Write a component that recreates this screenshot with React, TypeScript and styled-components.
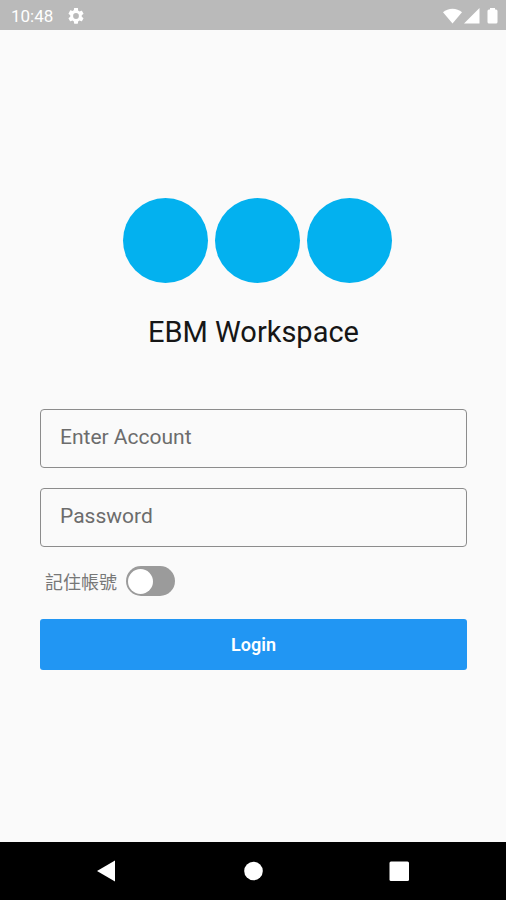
import React from "react";
import styled, { createGlobalStyle } from "styled-components";

const GlobalStyle = createGlobalStyle`
  *, *::before, *::after { box-sizing: border-box; }
  body {
    margin: 0;
    background: #fafafa;
    font-family: Roboto, "Noto Sans CJK TC", sans-serif;
  }
`;

const Screen = styled.div`
  min-height: 100vh;
  display: flex;
  flex-direction: column;
`;

const StatusBar = styled.header`
  height: 30px;
  padding: 2px 8px 0 11px;
  display: flex;
  align-items: center;
  justify-content: space-between;
  background: #bababa;
  color: #fff;
  font-size: 17px;
`;

const StatusGroup = styled.div<{ $gap: number }>`
  display: flex;
  align-items: center;
  gap: ${({ $gap }) => $gap}px;
`;

const Icon = styled.svg`
  display: block;
  fill: #fff;
`;

const Main = styled.main`
  flex: 1;
  display: flex;
  flex-direction: column;
  justify-content: center;
  padding: 0 39px 4px 40px;
`;

const Logo = styled.div`
  display: flex;
  justify-content: center;
  gap: 7px;
  padding-left: 8px;
`;

const Dot = styled.span`
  width: 85px;
  height: 85px;
  border-radius: 50%;
  background: #03b1ef;
`;

const Title = styled.h1`
  margin: 32px 0 60px;
  font-size: 29px;
  line-height: 34px;
  font-weight: 400;
  text-align: center;
  color: #161616;
`;

const Form = styled.form`
  display: flex;
  flex-direction: column;
  gap: 20px;
`;

const Field = styled.input`
  width: 100%;
  height: 59px;
  padding: 0 19px 3px;
  border: 1px solid #8c8c8c;
  border-radius: 4px;
  background: transparent;
  font: inherit;
  font-size: 21px;
  color: #212121;

  &::placeholder {
    color: #6c6c6c;
    opacity: 1;
  }
`;

const RememberRow = styled.label`
  display: flex;
  align-items: center;
  gap: 9px;
  height: 28px;
  padding-left: 5px;
  font-size: 18px;
  color: #777;
`;

const Switch = styled.input`
  appearance: none;
  width: 49px;
  height: 30px;
  margin: 0;
  padding: 2px;
  display: flex;
  align-items: center;
  border-radius: 15px;
  background: #9b9b9b;

  &::before {
    content: "";
    width: 25px;
    height: 25px;
    border-radius: 50%;
    background: #fff;
  }

  &:checked {
    justify-content: flex-end;
    background: #2196f3;
  }
`;

const LoginButton = styled.button`
  height: 51px;
  margin-top: 4px;
  border: 0;
  border-radius: 3px;
  background: #2196f3;
  color: #fff;
  font: inherit;
  font-size: 18px;
  font-weight: 600;
`;

const NavBar = styled.nav`
  height: 58px;
  display: flex;
  align-items: center;
  justify-content: center;
  gap: 122px;
  background: #000;
`;

const NavButton = styled.button`
  width: 24px;
  height: 24px;
  padding: 0;
  border: 0;
  background: none;
`;

export default function App() {
  return (
    <Screen>
      <GlobalStyle />
      <StatusBar>
        <StatusGroup $gap={15}>
          <span>10:48</span>
          <Icon width="16" height="16" viewBox="2 2 20 20" aria-hidden="true">
            <path d="M19.14 12.94c.04-.3.06-.61.06-.94s-.02-.64-.07-.94l2.03-1.58a.49.49 0 0 0 .12-.61l-1.92-3.32a.49.49 0 0 0-.59-.22l-2.39.96c-.5-.38-1.03-.7-1.62-.94l-.36-2.54A.48.48 0 0 0 13.92 2h-3.84c-.24 0-.43.17-.47.41l-.36 2.54c-.59.24-1.13.57-1.62.94l-2.39-.96a.48.48 0 0 0-.59.22L2.74 8.87a.48.48 0 0 0 .12.61l2.03 1.58c-.05.3-.09.63-.09.94s.02.64.07.94l-2.03 1.58a.49.49 0 0 0-.12.61l1.92 3.32c.12.22.37.29.59.22l2.39-.96c.5.38 1.03.7 1.62.94l.36 2.54c.05.24.24.41.48.41h3.84c.24 0 .44-.17.47-.41l.36-2.54c.59-.24 1.13-.56 1.62-.94l2.39.96c.22.08.47 0 .59-.22l1.92-3.32a.48.48 0 0 0-.12-.61zM12 15.6a3.6 3.6 0 1 1 0-7.2 3.6 3.6 0 0 1 0 7.2z" />
          </Icon>
        </StatusGroup>
        <StatusGroup $gap={2}>
          <Icon width="19" height="16" viewBox="0 0 19 16" aria-hidden="true">
            <path d="M9.5 15.500 0 4.300C5-.5 14-.5 19 4.300z" />
          </Icon>
          <Icon width="16" height="16" viewBox="0 0 16 16" aria-hidden="true">
            <path d="M0 15.500 15.500 0v15.500z" />
          </Icon>
          <Icon width="16" height="18" viewBox="0 0 16 18" aria-hidden="true">
            <path d="M8 2.500V1h5v1.500h1q1.500 0 1.500 1.500V15q0 1.500-1.500 1.500H7q-1.500 0-1.500-1.500V4Q5.500 2.500 7 2.500z" />
          </Icon>
        </StatusGroup>
      </StatusBar>
      <Main>
        <Logo aria-hidden="true">
          <Dot />
          <Dot />
          <Dot />
        </Logo>
        <Title>EBM Workspace</Title>
        <Form onSubmit={(event) => event.preventDefault()}>
          <Field type="text" placeholder="Enter Account" aria-label="Enter Account" />
          <Field type="password" placeholder="Password" aria-label="Password" />
          <RememberRow>
            記住帳號
            <Switch type="checkbox" role="switch" />
          </RememberRow>
          <LoginButton type="submit">Login</LoginButton>
        </Form>
      </Main>
      <NavBar>
        <NavButton aria-label="Back">
          <Icon width="24" height="24" viewBox="0 0 24 24">
            <path d="M2 12 20 1.500v21z" />
          </Icon>
        </NavButton>
        <NavButton aria-label="Home">
          <Icon width="24" height="24" viewBox="0 0 24 24">
            <circle cx="12.500" cy="12" r="9.300" />
          </Icon>
        </NavButton>
        <NavButton aria-label="Recent apps">
          <Icon width="24" height="24" viewBox="0 0 24 24">
            <rect x="2.500" y="2.500" width="19.500" height="19.500" rx="1.500" />
          </Icon>
        </NavButton>
      </NavBar>
    </Screen>
  );
}
